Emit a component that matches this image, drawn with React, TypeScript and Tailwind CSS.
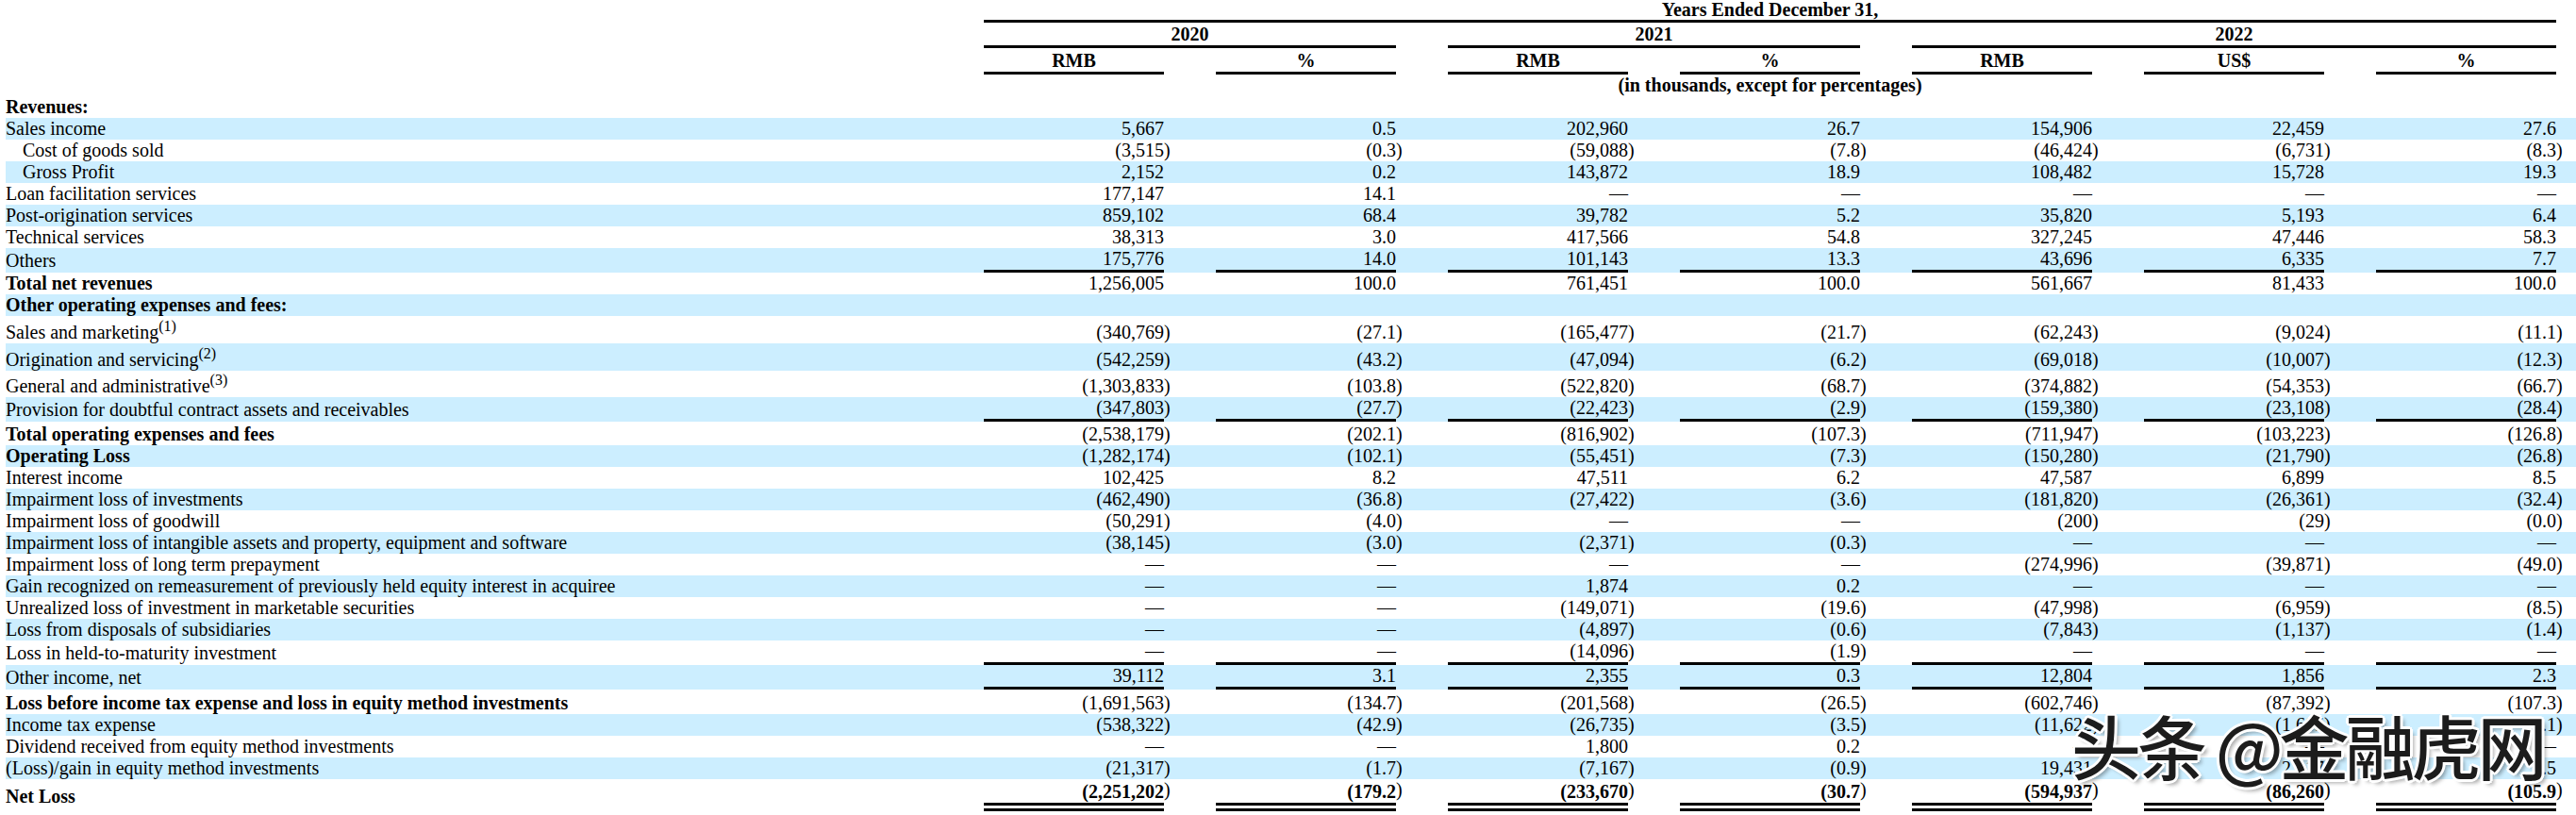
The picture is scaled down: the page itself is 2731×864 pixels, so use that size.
import React from 'react';

type Row = {
  label: string;
  sup?: string;
  values?: string[];
  bold?: boolean;
  boldValues?: boolean;
  indent?: boolean;
  rule?: 'single' | 'double';
  pad?: string;
};

const ROWS: Row[] = [
  { label: 'Revenues:', bold: true },
  { label: 'Sales income', values: ['5,667', '0.5', '202,960', '26.7', '154,906', '22,459', '27.6'] },
  { label: 'Cost of goods sold', indent: true, values: ['(3,515)', '(0.3)', '(59,088)', '(7.8)', '(46,424)', '(6,731)', '(8.3)'] },
  { label: 'Gross Profit', indent: true, values: ['2,152', '0.2', '143,872', '18.9', '108,482', '15,728', '19.3'] },
  { label: 'Loan facilitation services', values: ['177,147', '14.1', '—', '—', '—', '—', '—'] },
  { label: 'Post-origination services', values: ['859,102', '68.4', '39,782', '5.2', '35,820', '5,193', '6.4'] },
  { label: 'Technical services', values: ['38,313', '3.0', '417,566', '54.8', '327,245', '47,446', '58.3'] },
  { label: 'Others', rule: 'single', values: ['175,776', '14.0', '101,143', '13.3', '43,696', '6,335', '7.7'] },
  { label: 'Total net revenues', bold: true, values: ['1,256,005', '100.0', '761,451', '100.0', '561,667', '81,433', '100.0'] },
  { label: 'Other operating expenses and fees:', bold: true },
  { label: 'Sales and marketing', sup: '(1)', pad: 'pt-[6px]', values: ['(340,769)', '(27.1)', '(165,477)', '(21.7)', '(62,243)', '(9,024)', '(11.1)'] },
  { label: 'Origination and servicing', sup: '(2)', pad: 'pt-[6px]', values: ['(542,259)', '(43.2)', '(47,094)', '(6.2)', '(69,018)', '(10,007)', '(12.3)'] },
  { label: 'General and administrative', sup: '(3)', pad: 'pt-[5px]', values: ['(1,303,833)', '(103.8)', '(522,820)', '(68.7)', '(374,882)', '(54,353)', '(66.7)'] },
  { label: 'Provision for doubtful contract assets and receivables', rule: 'single', values: ['(347,803)', '(27.7)', '(22,423)', '(2.9)', '(159,380)', '(23,108)', '(28.4)'] },
  { label: 'Total operating expenses and fees', bold: true, pad: 'pt-[2px]', values: ['(2,538,179)', '(202.1)', '(816,902)', '(107.3)', '(711,947)', '(103,223)', '(126.8)'] },
  { label: 'Operating Loss', bold: true, values: ['(1,282,174)', '(102.1)', '(55,451)', '(7.3)', '(150,280)', '(21,790)', '(26.8)'] },
  { label: 'Interest income', values: ['102,425', '8.2', '47,511', '6.2', '47,587', '6,899', '8.5'] },
  { label: 'Impairment loss of investments', values: ['(462,490)', '(36.8)', '(27,422)', '(3.6)', '(181,820)', '(26,361)', '(32.4)'] },
  { label: 'Impairment loss of goodwill', values: ['(50,291)', '(4.0)', '—', '—', '(200)', '(29)', '(0.0)'] },
  { label: 'Impairment loss of intangible assets and property, equipment and software', values: ['(38,145)', '(3.0)', '(2,371)', '(0.3)', '—', '—', '—'] },
  { label: 'Impairment loss of long term prepayment', values: ['—', '—', '—', '—', '(274,996)', '(39,871)', '(49.0)'] },
  { label: 'Gain recognized on remeasurement of previously held equity interest in acquiree', values: ['—', '—', '1,874', '0.2', '—', '—', '—'] },
  { label: 'Unrealized loss of investment in marketable securities', values: ['—', '—', '(149,071)', '(19.6)', '(47,998)', '(6,959)', '(8.5)'] },
  { label: 'Loss from disposals of subsidiaries', values: ['—', '—', '(4,897)', '(0.6)', '(7,843)', '(1,137)', '(1.4)'] },
  { label: 'Loss in held-to-maturity investment', rule: 'single', values: ['—', '—', '(14,096)', '(1.9)', '—', '—', '—'] },
  { label: 'Other income, net', rule: 'single', values: ['39,112', '3.1', '2,355', '0.3', '12,804', '1,856', '2.3'] },
  { label: 'Loss before income tax expense and loss in equity method investments', bold: true, pad: 'pt-[3px]', values: ['(1,691,563)', '(134.7)', '(201,568)', '(26.5)', '(602,746)', '(87,392)', '(107.3)'] },
  { label: 'Income tax expense', values: ['(538,322)', '(42.9)', '(26,735)', '(3.5)', '(11,622)', '(1,685)', '(2.1)'] },
  { label: 'Dividend received from equity method investments', values: ['—', '—', '1,800', '0.2', '—', '—', '—'] },
  { label: '(Loss)/gain in equity method investments', values: ['(21,317)', '(1.7)', '(7,167)', '(0.9)', '19,431', '2,817', '3.5'] },
  { label: 'Net Loss', bold: true, boldValues: true, pad: 'pt-[2px]', rule: 'double', values: ['(2,251,202)', '(179.2)', '(233,670)', '(30.7)', '(594,937)', '(86,260)', '(105.9)'] },
];

const SUB_HEADS = ['RMB', '%', 'RMB', '%', 'RMB', 'US$', '%'];

function Amount({ v, bold }: { v: string; bold?: boolean }) {
  if (!v.endsWith(')')) return <>{v}</>;
  return (
    <>
      {v.slice(0, -1)}
      <span className={`inline-block w-0 ${bold ? 'font-normal -translate-y-[2px]' : ''}`}>)</span>
    </>
  );
}

function Spacer() {
  return <td />;
}

export default function App() {
  return (
    <div className="relative h-[864px] w-[2731px] overflow-hidden bg-white pl-[6px] font-['Liberation_Serif','Times_New_Roman',serif] text-[20px] text-black">
      <table className="w-[2725px] table-fixed border-separate border-spacing-0">
        <colgroup>
          <col className="w-[982px]" />
          {SUB_HEADS.map((_, i) => (
            <React.Fragment key={i}>
              <col className="w-[55px]" />
              <col className="w-[191px]" />
            </React.Fragment>
          ))}
          <col className="w-[21px]" />
        </colgroup>
        <thead className="font-bold leading-[23px]">
          <tr>
            <td />
            <Spacer />
            <td colSpan={13} className="border-b-[3px] border-black text-center leading-[21px]">
              Years Ended December 31,
            </td>
            <td />
          </tr>
          <tr>
            <td />
            <Spacer />
            <td colSpan={3} className="border-b-[3px] border-black pt-[1px] text-center leading-[23px]">
              2020
            </td>
            <Spacer />
            <td colSpan={3} className="border-b-[3px] border-black pt-[1px] text-center leading-[23px]">
              2021
            </td>
            <Spacer />
            <td colSpan={5} className="border-b-[3px] border-black pt-[1px] text-center leading-[23px]">
              2022
            </td>
            <td />
          </tr>
          <tr>
            <td />
            {SUB_HEADS.map((h, i) => (
              <React.Fragment key={i}>
                <Spacer />
                <td className="border-b-[3px] border-black pt-[1px] text-center leading-[24px]">{h}</td>
              </React.Fragment>
            ))}
            <td />
          </tr>
          <tr>
            <td />
            <Spacer />
            <td colSpan={13} className="text-center leading-[23px]">
              (in thousands, except for percentages)
            </td>
            <td />
          </tr>
        </thead>
        <tbody className="leading-[23px]">
          {ROWS.map((row, r) => {
            const blue = r % 2 === 1;
            const pad = row.pad ?? '';
            const rule =
              row.rule === 'single'
                ? 'border-b-[3px] border-black'
                : row.rule === 'double'
                  ? 'border-b-[9px] border-double border-black'
                  : '';
            return (
              <tr key={r} className={blue ? 'bg-[#cceeff]' : ''}>
                <td className={`whitespace-nowrap ${pad} ${row.bold ? 'font-bold' : ''} ${row.indent ? 'pl-[18px]' : ''}`}>
                  {row.label}
                  {row.sup && <sup className="text-[16px]">{row.sup}</sup>}
                </td>
                {SUB_HEADS.map((_, i) => (
                  <React.Fragment key={i}>
                    <td className={pad} />
                    <td
                      className={`whitespace-nowrap text-right ${pad} ${row.values ? rule : ''} ${row.boldValues ? 'font-bold' : ''}`}
                    >
                      {row.values && <Amount v={row.values[i]} bold={row.boldValues} />}
                    </td>
                  </React.Fragment>
                ))}
                <td className={pad} />
              </tr>
            );
          })}
        </tbody>
      </table>

      {/* watermark */}
      <div className="absolute left-[2196px] top-[752px] whitespace-nowrap font-['Noto_Sans_CJK_SC',sans-serif] text-[74px] font-medium leading-none tracking-[-4px] text-[#1c1c1c] [text-shadow:3px_0_0_#fff,-3px_0_0_#fff,0_3px_0_#fff,0_-3px_0_#fff,2px_2px_0_#fff,-2px_-2px_0_#fff,2px_-2px_0_#fff,-2px_2px_0_#fff,4px_4px_4px_rgba(0,0,0,0.35)]">
        头条 @金融虎网
      </div>
    </div>
  );
}
